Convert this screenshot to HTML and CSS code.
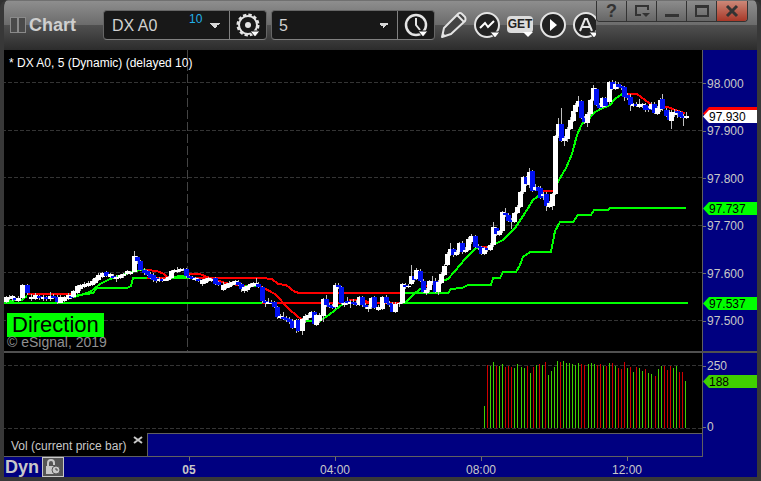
FILE: index.html
```html
<!DOCTYPE html>
<html lang="en">
<head>
    <meta charset="UTF-8">
    <meta name="viewport" content="width=device-width, initial-scale=1.0">
    <title>Chart</title>
    <link rel="stylesheet" href="styles.css">
</head>
<body>
    <div class="window">
        <header class="titlebar">
            <span class="grip"></span>
            <h1>Chart</h1>
            <div class="combo symbol">
                <input class="symbol-input" type="text" value="DX A0" aria-label="Symbol">
                <span class="badge">10</span>
                <button class="arrow" aria-label="Symbol list"></button>
                <button class="combo-button" aria-label="Settings">
                    <svg width="28" height="28" viewBox="0 0 28 28">
                        <circle cx="14" cy="14" r="9" fill="none" stroke="#e4e4e4" stroke-width="2"/>
                        <circle cx="14" cy="14" r="10" fill="none" stroke="#e4e4e4" stroke-width="3" stroke-dasharray="3.24 2"/>
                        <circle cx="14" cy="14" r="3" fill="#e4e4e4"/>
                        <path d="M16 20h10l-5 6z" fill="#fff" stroke="#181818"/>
                    </svg>
                </button>
            </div>
            <div class="combo interval">
                <select class="interval-select" aria-label="Interval">
                    <option>5</option>
                </select>
                <button class="combo-button" aria-label="Time template">
                    <svg width="28" height="28" viewBox="0 0 28 28">
                        <circle cx="14" cy="14" r="10" fill="none" stroke="#e4e4e4" stroke-width="2.5"/>
                        <path d="M14 7v7l4 5" fill="none" stroke="#e4e4e4" stroke-width="2"/>
                        <path d="M16 20h10l-5 6z" fill="#fff" stroke="#181818"/>
                    </svg>
                </button>
            </div>
            <div class="tools">
                <button class="tool" aria-label="Draw">
                    <svg width="28" height="28" viewBox="0 0 28 28">
                        <path d="M2 26l2-9L18 3q2-2 4 0l3 3q1 2 0 4L11 23z" fill="#444" stroke="#e4e4e4" stroke-width="2" stroke-linejoin="round"/>
                        <path d="M17 4l7 7" stroke="#e4e4e4" stroke-width="2"/>
                        <path d="M2 26l1-4 3 3z" fill="#e4e4e4"/>
                    </svg>
                </button>
                <button class="tool" aria-label="Studies">
                    <svg width="28" height="28" viewBox="0 0 28 28">
                        <circle cx="14" cy="14" r="12" fill="#222" stroke="#e4e4e4" stroke-width="2"/>
                        <path d="M7 17l5-5 3 4 6-6" fill="none" stroke="#fff" stroke-width="2"/>
                        <path d="M17 21h10l-5 6z" fill="#fff" stroke="#333"/>
                    </svg>
                </button>
                <button class="tool get" aria-label="GET studies">
                    <span>GET</span>
                    <i class="down"></i>
                </button>
                <button class="tool" aria-label="Play">
                    <svg width="28" height="28" viewBox="0 0 28 28">
                        <circle cx="14" cy="14" r="12" fill="#222" stroke="#e4e4e4" stroke-width="2"/>
                        <path d="M11 8l7 6-7 6z" fill="#fff"/>
                    </svg>
                </button>
                <button class="tool" aria-label="Alerts">
                    <svg width="28" height="28" viewBox="0 0 28 28">
                        <circle cx="14" cy="14" r="12" fill="#222" stroke="#e4e4e4" stroke-width="2"/>
                        <path d="M8 20l5-12h2l5 12M10 16h8" fill="none" stroke="#e4e4e4" stroke-width="2"/>
                        <path d="M17 21h10l-5 6z" fill="#fff" stroke="#333"/>
                    </svg>
                </button>
            </div>
            <div class="window-buttons">
                <button class="help">?</button>
                <button aria-label="Window menu">
                    <svg width="16" height="14" viewBox="0 0 16 14"><path d="M7 11H2V2h12v4" fill="none" stroke="#333" stroke-width="2"/><path d="M8 9h8l-4 4z" fill="#333"/></svg>
                </button>
                <button aria-label="Minimize">
                    <svg width="16" height="14" viewBox="0 0 16 14"><path d="M1 10h14v3H1z" fill="#333"/></svg>
                </button>
                <button aria-label="Maximize">
                    <svg width="16" height="14" viewBox="0 0 16 14"><path d="M2 2h12v10H2zM2 3h12" fill="none" stroke="#333" stroke-width="2"/></svg>
                </button>
                <button class="close" aria-label="Close">
                    <svg width="16" height="14" viewBox="0 0 16 14"><path d="M3 2l10 10M13 2L3 12" stroke="#333" stroke-width="3"/></svg>
                </button>
            </div>
        </header>

        <main class="workspace">
            <section class="pane price-pane">
                <div class="plot">
                    <svg id="price" viewBox="4 50 698 301" preserveAspectRatio="none"></svg>
                    <p class="caption">* DX A0, 5 (Dynamic) (delayed 10)</p>
                    <p class="direction">Direction</p>
                    <p class="copyright">© eSignal, 2019</p>
                </div>
                <div class="axis">
                    <ul class="scale">
                        <li>98.000</li>
                        <li>97.900</li>
                        <li>97.800</li>
                        <li>97.700</li>
                        <li>97.600</li>
                        <li>97.500</li>
                    </ul>
                    <span class="tag tag-average"></span>
                    <span class="tag tag-last">97.930</span>
                    <span class="tag tag-upper">97.737</span>
                    <span class="tag tag-lower">97.537</span>
                </div>
            </section>

            <section class="pane volume-pane">
                <div class="plot">
                    <svg id="volume" viewBox="4 353 698 80" preserveAspectRatio="none"></svg>
                </div>
                <div class="axis">
                    <ul class="scale">
                        <li>250</li>
                        <li>0</li>
                    </ul>
                    <span class="tag tag-volume">188</span>
                </div>
            </section>

            <div class="tabs">
                <div class="tab">
                    <span>Vol (current price bar)</span>
                    <button class="tab-close" aria-label="Remove study">
                        <svg width="10" height="8" viewBox="0 0 10 8"><path d="M1 1l8 6M9 1L1 7" stroke="#c8c8c8" stroke-width="2"/></svg>
                    </button>
                </div>
                <div class="tab-rest"></div>
            </div>

            <footer class="times">
                <div class="mode">
                    <strong>Dyn</strong>
                    <button class="lock" aria-label="Lock time template">
                        <svg width="18" height="18" viewBox="0 0 18 18">
                            <path d="M4 9V5q0-3 3-3t3 3v2" fill="none" stroke="#c8c8c8" stroke-width="2"/>
                            <path d="M2 8h9v8H2z" fill="#c8c8c8"/>
                            <circle cx="12" cy="12" r="4" fill="#c8c8c8" stroke="#555"/>
                            <path d="M12 10v2h2" fill="none" stroke="#444"/>
                        </svg>
                    </button>
                </div>
                <span class="time day">05</span>
                <span class="time">04:00</span>
                <span class="time">08:00</span>
                <span class="time">12:00</span>
            </footer>
        </main>
    </div>

    <script src="chart.js"></script>
</body>
</html>
```

FILE: styles.css
```css
* {
    box-sizing: border-box;
}

body {
    margin: 0;
    background: #303030;
    color: #c8c8c8;
    font: 12px/14px "Liberation Sans", Arial, sans-serif;
}

h1, p, ul {
    margin: 0;
    padding: 0;
}

button {
    padding: 0;
    border: 0;
    background: none;
    color: inherit;
    font: inherit;
}

svg {
    display: block;
}

.window {
    display: flex;
    flex-direction: column;
    height: 100vh;
    min-height: 400px;
    border: solid #383838;
    border-width: 0 4px 4px;
    border-radius: 8px 8px 0 0;
    overflow: hidden;
}

/* title bar */
.titlebar {
    display: flex;
    align-items: flex-start;
    flex: none;
    height: 50px;
    margin: 0 -4px;
    padding-left: 10px;
    border-top: 1px solid #707070;
    background: linear-gradient(#8e8e8e, #6c6c6c 48%, #505050 49%, #2c2c2c);
}

.titlebar h1 {
    width: 77px;
    padding-left: 3px;
    color: #cfcfcf;
    font-size: 18px;
    line-height: 48px;
}

.grip {
    display: flex;
    justify-content: space-between;
    width: 16px;
    height: 16px;
    margin-top: 16px;
}

.grip::before,
.grip::after {
    content: "";
    width: 7px;
    border: 1px solid #8a8a8a;
    background: #4a4a4a;
}

.combo {
    display: flex;
    width: 164px;
    height: 30px;
    margin: 9px 4px 0 0;
    border: 1px solid #666666;
    border-bottom-color: #808080;
    border-radius: 4px;
    background: #181818;
    overflow: hidden;
}

.symbol-input,
.interval-select {
    flex: 1;
    min-width: 0;
    padding: 1px 0 0 8px;
    border: 0;
    background: none;
    color: #d0d0d0;
    font: 16px/28px "Liberation Sans", Arial, sans-serif;
    appearance: none;
}

.badge {
    width: 20px;
    color: #22b0e8;
    line-height: 16px;
}

.arrow,
.interval-select {
    background-image: linear-gradient(to top right, transparent 50%, #d8d8d8 50%), linear-gradient(to top left, transparent 50%, #d8d8d8 50%);
    background-size: 5px 5px;
    background-repeat: no-repeat;
}

.arrow {
    width: 20px;
    background-position: 1px center, 6px center;
}

.interval-select {
    padding-left: 7px;
    background-position: right 13px center, right 8px center;
}

.combo-button {
    display: flex;
    align-items: center;
    justify-content: center;
    width: 37px;
    border-left: 1px solid #808080;
}

.tools {
    display: flex;
    gap: 5px;
    flex: 1;
    min-width: 0;
    padding: 10px 0 0 1px;
    overflow: hidden;
}

.tool {
    flex: none;
    width: 28px;
    height: 28px;
}

.get {
    position: relative;
}

.get span {
    display: block;
    height: 17px;
    margin: 0 1px 2px;
    border-radius: 4px;
    background: #dcdcdc;
    color: #222222;
    font: bold 12px/17px "Liberation Sans", Arial, sans-serif;
}

.down {
    position: absolute;
    right: 1px;
    bottom: 2px;
    border: solid transparent;
    border-width: 5px 5px 0;
    border-top-color: #ffffff;
}

.window-buttons {
    display: flex;
    margin-right: 13px;
    border: 1px solid #333333;
    border-top: 0;
    border-radius: 0 0 4px 4px;
    overflow: hidden;
}

.window-buttons button {
    display: flex;
    align-items: center;
    justify-content: center;
    width: 30px;
    height: 20px;
    border-right: 1px solid #333333;
    background: linear-gradient(#8c8c8c, #666666);
}

.window-buttons .help {
    color: #333333;
    font-size: 18px;
    font-weight: bold;
}

.window-buttons .close {
    border-right: 0;
    background: linear-gradient(#cc8878, #a83828);
}

/* chart panes */
.workspace {
    display: flex;
    flex-direction: column;
    flex: 1;
    min-height: 0;
    background: #000080;
}

.pane {
    display: grid;
    grid-template-columns: 1fr 55px;
}

.price-pane {
    flex: 1;
    min-height: 0;
    border-bottom: 2px solid #505050;
}

.volume-pane {
    height: 80px;
}

.plot {
    position: relative;
    min-height: 0;
    background: #000000;
}

.plot svg {
    width: 100%;
    height: 100%;
}

.caption {
    position: absolute;
    top: 6px;
    left: 5px;
    color: #ffffff;
}

.direction {
    position: absolute;
    bottom: 14px;
    left: 3px;
    width: 97px;
    padding-left: 5px;
    background: #00ff00;
    color: #000000;
    font-size: 22px;
    line-height: 24px;
}

.copyright {
    position: absolute;
    bottom: 2px;
    left: 3px;
    color: #909090;
    font-size: 14px;
    line-height: 14px;
}

.axis {
    position: relative;
    border-left: 1px solid #606060;
}

.scale {
    display: flex;
    flex-direction: column;
    height: 100%;
    list-style: none;
}

.price-pane .scale {
    padding: 10px 0 6px;
}

.volume-pane .scale {
    justify-content: space-between;
    padding-top: 6px;
}

.scale li {
    display: flex;
    align-items: center;
    gap: 1px;
}

.price-pane li {
    flex: 1;
}

.volume-pane li {
    height: 14px;
}

.volume-pane li:last-child {
    height: 12px;
}

.scale li::before {
    content: "";
    width: 3px;
    height: 1px;
    background: #707070;
}

.tag {
    position: absolute;
    left: 0;
    width: 54px;
    height: 13px;
    padding-left: 6px;
    background: #00ff00;
    color: #000000;
    line-height: 14px;
    clip-path: polygon(0 50%, 6px 0, 100% 0, 100% 100%, 6px 100%);
}

.tag-average {
    top: 57px;
    background: #ff0000;
}

.tag-last {
    top: 60px;
    background: #ffffff;
}

.tag-upper {
    top: 152px;
}

.tag-lower {
    top: 247px;
}

.tag-volume {
    top: 22px;
    background: #40d000;
}

/* study tabs */
.tabs {
    display: flex;
    height: 24px;
    margin-right: 54px;
    border: solid #606060;
    border-width: 0 1px 1px 0;
}

.tab {
    display: flex;
    align-items: flex-start;
    justify-content: space-between;
    width: 144px;
    padding: 6px 4px 0 7px;
    border-right: 1px solid #606060;
    background: #000000;
}

.tab-close {
    padding-bottom: 6px;
    margin-top: -3px;
}

.tab-rest {
    flex: 1;
    border-top: 1px solid #606060;
}

/* time axis */
.times {
    display: flex;
    height: 20px;
    margin-right: 57px;
}

.mode {
    display: flex;
    flex: none;
    width: 112px;
    padding-left: 1px;
    gap: 3px;
}

.mode strong {
    font-size: 18px;
    line-height: 20px;
}

.lock {
    display: flex;
    align-items: center;
    justify-content: center;
    width: 22px;
    height: 20px;
    border: 1px solid #c8c8c8;
    background: #555555;
}

.time {
    flex: 1;
    text-align: center;
}

.time::before {
    content: "";
    display: block;
    width: 1px;
    height: 4px;
    margin: 0 auto 2px;
    background: #707070;
}

.day {
    font-weight: bold;
}
```

FILE: chart.js
```js
// bars: x, body top, body bottom, direction (u/d), wick top, wick bottom
const bars = `
6 297 302 u 296 303,9 297 299 u 295 300,12 296 299 u 295 301,15 298 300 d 297 301,18 298 301 u 296 302,
22 285 298 u 284 299,27 285 293 d 284 295,31 297 299 u 294 301,35 295 299 u 293 300,39 296 298 d 295 300,
43 297 299 u 295 301,46 297 299 d 296 301,50 296 299 u 292 301,53 296 298 d 294 299,57 297 302 d 295 304,
60 297 303 u 295 303,64 297 301 u 296 302,68 295 299 u 293 300,71 296 298 d 293 299,73 291 297 u 290 298,
77 286 293 u 285 294,80 285 289 u 284 291,84 284 287 u 282 288,88 283 286 u 281 287,92 281 285 u 279 286,
95 278 283 u 277 284,98 275 280 u 273 281,102 273 277 u 272 278,106 272 276 d 271 277,110 274 277 u 273 278,
113 276 278 d 274 279,116 277 279 u 275 282,120 275 278 u 274 279,123 274 276 u 273 278,127 271 274 u 270 275,
130 272 274 u 271 275,134 256 272 u 251 272,137 257 261 d 256 264,140 261 270 d 260 271,144 270 273 d 268 275,
147 271 275 d 270 276,150 274 278 d 272 279,153 275 280 d 273 282,156 278 281 d 277 283,159 279 281 u 277 282,
162 279 281 d 278 282,165 279 281 u 278 281,168 277 280 u 276 281,171 271 278 u 270 279,174 270 272 u 269 273,
177 270 272 u 267 273,180 269 271 u 268 272,183 269 270 u 268 271,186 269 276 d 268 278,189 276 278 d 275 279,
192 277 279 d 276 280,195 278 280 u 277 281,198 279 281 d 278 282,202 280 284 u 279 286,205 279 283 u 278 284,
208 278 281 u 277 282,211 279 281 u 278 282,215 278 284 d 277 285,218 282 285 d 281 286,223 285 290 u 282 291,
226 284 288 u 283 289,229 283 287 u 281 288,232 282 285 u 281 286,235 281 284 u 280 285,238 282 285 d 280 286,
241 284 289 d 283 292,244 287 291 u 286 293,247 286 290 u 285 292,250 284 287 u 283 288,253 283 286 u 282 287,
256 283 284 u 278 286,258 284 287 d 282 288,262 287 301 d 286 303,265 301 303 d 300 307,268 302 304 u 298 304,
271 302 303 d 300 304,274 302 307 d 301 308,277 307 317 d 306 319,280 316 318 u 314 319,283 317 319 d 312 320,
286 318 320 d 316 322,289 319 322 d 317 324,292 321 328 d 319 329,296 320 328 u 319 333,298 320 331 d 319 332,
302 319 331 u 318 335,305 316 320 u 314 323,308 315 318 u 313 320,311 312 317 u 311 318,314 312 324 d 311 325,
316 315 325 u 314 326,319 315 321 u 313 323,323 299 316 u 298 322,326 299 305 d 295 307,329 305 307 d 303 308,
332 306 308 d 304 309,335 285 307 u 283 309,338 285 287 d 283 289,341 287 303 d 286 304,344 303 305 u 302 307,
347 301 303 d 297 305,350 302 304 u 300 308,353 302 304 d 299 305,356 303 305 d 300 306,359 297 305 u 296 306,
362 297 305 d 296 307,365 305 307 d 303 309,368 307 309 u 305 312,371 298 307 u 297 309,374 297 308 d 296 309,
378 307 310 u 305 311,382 297 309 u 296 310,386 297 303 d 295 304,389 303 305 d 301 307,392 304 312 d 302 312,
395 304 312 u 302 313,399 303 304 u 302 307,402 284 303 u 283 304,405 285 287 d 283 289,408 286 287 u 284 288,
411 276 284 u 265 285,414 276 280 d 275 282,416 270 279 u 268 280,420 271 281 d 269 282,423 281 292 d 279 293,
426 290 293 u 288 295,429 281 290 u 280 292,432 281 283 u 276 285,435 281 292 d 278 293,438 282 292 u 280 295,
441 274 283 u 272 284,444 266 275 u 264 276,447 254 265 u 252 266,450 249 255 u 243 256,453 249 255 d 248 257,
456 252 255 u 250 256,459 243 252 u 242 254,462 243 252 d 241 254,465 250 252 u 247 253,468 239 250 u 237 251,
471 236 242 u 234 244,475 236 247 d 235 248,478 246 248 d 244 250,481 247 254 d 246 255,484 248 254 u 247 255,
487 248 250 d 246 252,490 245 250 u 243 251,493 227 245 u 222 247,496 228 234 d 227 236,499 231 235 u 230 236,
502 212 231 u 211 233,505 213 215 d 208 217,508 215 221 d 213 222,511 220 222 d 218 229,514 213 222 u 212 223,
517 207 213 u 205 214,520 192 207 u 191 208,523 177 192 u 176 194,526 177 184 d 176 186,529 172 185 u 168 188,
532 171 191 d 170 192,535 187 190 u 184 191,538 187 191 d 186 193,540 188 198 d 186 199,543 194 196 u 192 200,
546 194 206 d 192 211,549 203 207 u 201 208,552 194 206 u 193 210,555 136 194 u 135 195,558 124 136 u 118 138,
561 124 141 d 108 142,564 138 141 u 136 146,567 129 139 u 127 142,570 120 129 u 117 130,573 111 121 u 109 122,
575 105 112 u 103 114,578 101 106 u 96 107,581 101 118 d 100 119,584 118 122 d 116 124,587 114 123 u 112 127,
590 100 114 u 99 116,593 88 100 u 85 101,596 89 105 d 88 106,599 105 108 d 103 109,602 98 107 u 97 108,
605 98 106 d 97 107,609 82 102 u 81 104,612 82 89 d 80 90,615 84 89 u 81 90,618 84 87 d 82 89,
621 86 88 d 85 90,624 87 97 d 86 101,627 95 98 d 93 100,630 97 105 d 94 111,633 104 106 u 103 107,
636 104 106 d 102 107,639 104 107 u 99 108,642 104 106 u 103 108,645 105 110 d 103 112,648 108 110 d 106 112,
651 104 109 u 102 110,654 104 113 d 102 114,657 108 114 u 106 115,660 100 110 u 98 112,662 99 109 d 94 111,
666 110 116 d 108 117,669 112 120 d 110 121,671 112 121 u 110 129,674 112 115 u 109 117,677 111 113 d 110 118,
680 112 117 d 111 118,683 116 118 d 114 126,686 116 118 u 112 119`;

const lines = [
    // session level
    ['#00ff00', '4,303 262,303'],
    ['#ff0000', '262,303 402,303'],
    ['#00ff00', '402,303 688,303'],
    // stepped level
    ['#ff0000', '28,294 74,294'],
    ['#00ff00', '74,296 86,294 93,293 97,288 127,288 131,286 133,278 147,278'],
    ['#ff0000', '147,278 170,278'],
    ['#00ff00', '170,278 190,278'],
    ['#ff0000', '190,278 262,278 272,279 278,284 286,285 295,292 300,293 402,293'],
    ['#00ff00', '402,293 448,293 451,289 462,288 468,285 491,285 493,278 500,278 503,272 516,272 520,265 523,257 530,252 551,252 555,231 560,222 573,222 578,215 591,215 594,210 608,210 610,208 686,208'],
    // moving average
    ['#00ff00', '6,301 22,300 27,296'],
    ['#00ff00', '74,297 90,292 100,284 110,279 125,274 140,270 146,270'],
    ['#ff0000', '146,270 157,271 164,274 168,278'],
    ['#00ff00', '170,278 180,276 188,277'],
    ['#ff0000', '188,274 200,274 207,277 225,283 245,286'],
    ['#00ff00', '245,286 260,286'],
    ['#ff0000', '260,286 275,294 290,310 302,320'],
    ['#00ff00', '302,321 320,321 330,314 343,304 349,303'],
    ['#ff0000', '349,300 365,301 371,303'],
    ['#00ff00', '402,303 407,301 415,293 423,287'],
    ['#ff0000', '423,286 430,286'],
    ['#00ff00', '436,283 448,279 455,271 465,259 475,249 479,247'],
    ['#ff0000', '479,247 489,247'],
    ['#00ff00', '489,246 495,244 503,240 515,228 525,213 533,200 541,194'],
    ['#ff0000', '541,191 554,191'],
    ['#00ff00', '556,185 566,168 572,154 577,135 582,124 588,120 595,112 603,108 610,105 615,99 622,94'],
    ['#ff0000', '622,94 637,94 645,100 652,105 660,108 668,107 675,110 685,113']
];

const volumes = `g198 r75 g78 g66 r78 g78 g71 r80 r78 r82 g84 g71 g80 g84 r78 g98 r80 g75 r73 g74 r66 g105
g93 g81 g63 r67 g63 g69 g69 g72 g75 g68 r72 r75 g72 g69 g73 r74 r72 g78 r78 g69 r69 g77 r84 r87 r66 g84
r81 g96 r81 g84 g93 r87 g99 g102 r108 g87 g78 r78 r90 r78 g84 g78 r96 r96 g123`;

function grid(d, dash) {
    return `<path d="${d}" fill="none" stroke="#343434" stroke-dasharray="${dash}" shape-rendering="crispEdges"/>`;
}

let price = [82, 130, 177, 225, 272, 320].map(y => grid(`M2 ${y}.5H702`, '4 2')).join('');
price += grid('M187.5 50V351', '9 3').replace('#343434', '#444444');
price += lines.map(([color, points]) =>
    `<polyline points="${points}" fill="none" stroke="${color}" stroke-width="2" shape-rendering="crispEdges"/>`
).join('');

bars.trim().split(/,\s*/).forEach(bar => {
    const [x, top, bottom, dir, high, low] = bar.split(' ');
    price += `<path d="M${x} ${high}h1V${low}h-1z" fill="#c0c0c0"/>`;
    price += `<rect x="${x - 2}" y="${top}" width="5" height="${bottom - top}" fill="${dir === 'u' ? '#ffffff' : '#0010f0'}"/>`;
});
document.getElementById('price').innerHTML = price;

let volume = grid('M2 365.5H702', '4 2') + grid('M2 428.5H702', '4 2');
volumes.split(/\s+/).forEach((v, i) => {
    const x = 484 + Math.round(i * 3.045);
    const top = 340 + Math.round(v.slice(1) / 3);
    volume += `<rect x="${x}" y="${top}" width="1" height="${428 - top}" fill="${v[0] === 'g' ? '#40d000' : '#d00000'}"/>`;
});
document.getElementById('volume').innerHTML = volume;
```
